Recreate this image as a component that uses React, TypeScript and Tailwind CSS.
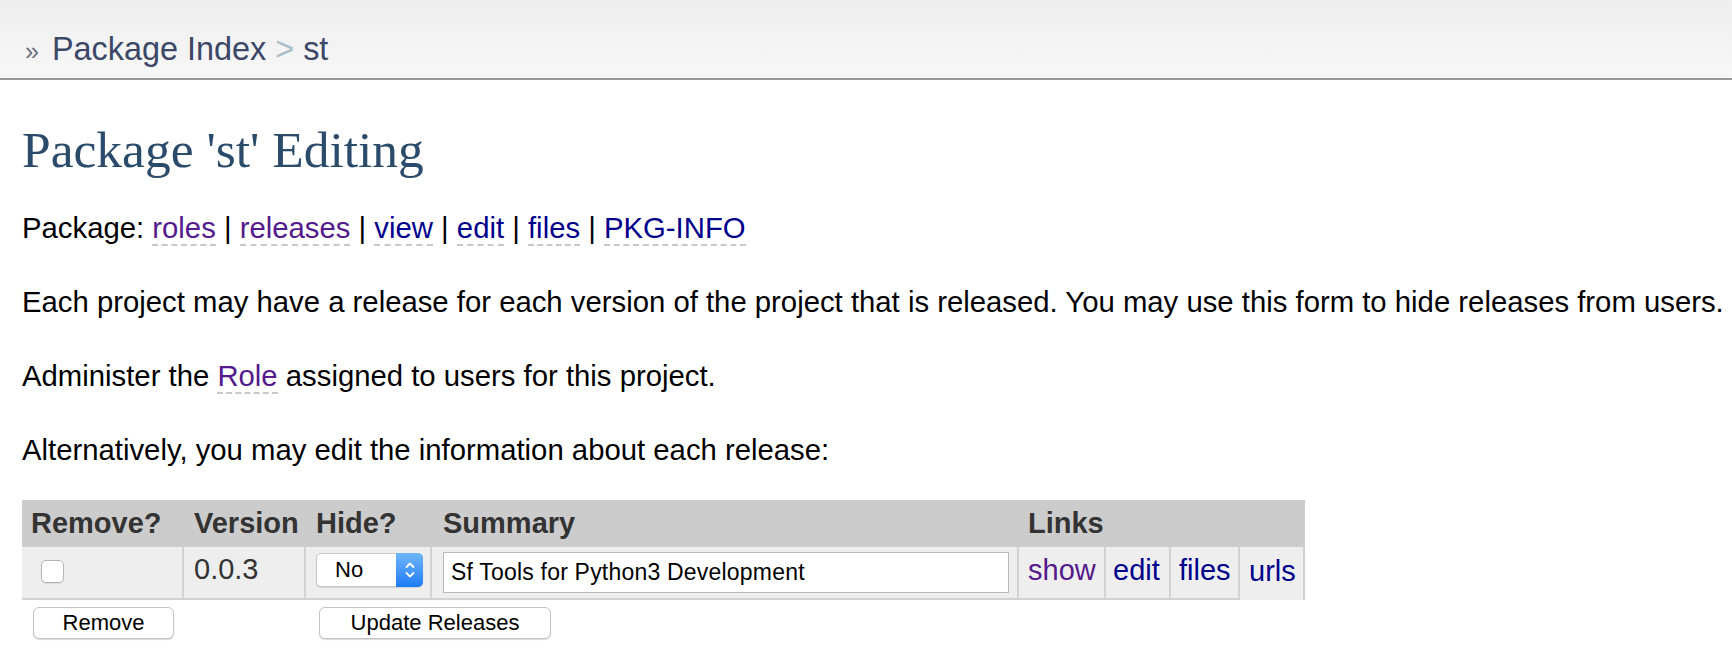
const dashed = "border-b-2 border-dashed border-[#c9c9c9]";
const visited = "text-[#551a8b]";
const link = "text-[#00008b]";

function HideSelect() {
  return (
    <div className="flex h-[34px] w-[107px] items-center rounded-[5px] border border-[#c8c8c8] bg-white shadow-[0_1px_1px_rgba(0,0,0,0.12)]">
      <span className="flex-1 pl-[18px] text-[22px] leading-none text-black">No</span>
      <span className="flex h-[34px] w-[27px] -mr-px -my-px items-center justify-center rounded-r-[5px] bg-linear-to-b from-[#6fb6fb] to-[#1a7bf4]">
        <svg width="12" height="22" viewBox="0 0 12 22" fill="none" stroke="white" strokeWidth="1.8" strokeLinecap="round" strokeLinejoin="round">
          <path d="M2.5 8 L6 4.5 L9.5 8" />
          <path d="M2.5 14 L6 17.5 L9.5 14" />
        </svg>
      </span>
    </div>
  );
}

function Button({ children, className }: { children: string; className?: string }) {
  return (
    <button
      className={
        "h-[32px] rounded-[6px] border border-[#c4c4c4] bg-white text-[22px] leading-none text-black shadow-[0_1px_1px_rgba(0,0,0,0.15)] " +
        (className ?? "")
      }
    >
      {children}
    </button>
  );
}

export default function App() {
  const cell = "h-[53px] bg-[#eeeeee] border-r-2 border-b-2 border-[#d2d2d2] align-middle";
  return (
    <div className="min-h-screen bg-white font-['Liberation_Sans',Arial,sans-serif] text-black">
      <header className="h-[80px] border-b-2 border-[#999999] bg-linear-to-b from-[#efeeef] to-[#f8f7f8] pl-[25px] pt-[31px]">
        <div className="flex items-baseline whitespace-pre text-[32.4px] leading-[37px] text-[#3b4766]">
          <span className="mr-[13px] text-[25px] text-[#6b7585]">»</span>
          <a>Package Index</a>
          <span className="text-[#a9bec6]"> &gt; </span>
          <span>st</span>
        </div>
      </header>

      <main className="pl-[22px]">
        <h1 className="mt-[40px] font-['Liberation_Serif',Georgia,serif] text-[51.5px] font-normal leading-[60px] text-[#2b4b6a]">
          Package 'st' Editing
        </h1>

        <p className="mt-[29px] whitespace-nowrap text-[29.3px] leading-[38px]">
          Package: <a className={`${visited} ${dashed}`}>roles</a> |{" "}
          <a className={`${visited} ${dashed}`}>releases</a> |{" "}
          <a className={`${link} ${dashed}`}>view</a> |{" "}
          <a className={`${link} ${dashed}`}>edit</a> |{" "}
          <a className={`${link} ${dashed}`}>files</a> |{" "}
          <a className={`${link} ${dashed}`}>PKG-INFO</a>
        </p>

        <p className="mt-[36px] whitespace-nowrap text-[29.3px] leading-[38px]">
          Each project may have a release for each version of the project that is released. You may use this form to hide
          releases from users.
        </p>

        <p className="mt-[36px] whitespace-nowrap text-[29.3px] leading-[38px]">
          Administer the <a className={`${visited} ${dashed}`}>Role</a> assigned to users for this project.
        </p>

        <p className="mt-[36px] whitespace-nowrap text-[29.3px] leading-[38px]">
          Alternatively, you may edit the information about each release:
        </p>

        <table className="mt-[31px] w-[1283px] table-fixed border-separate border-spacing-0 text-[29px] leading-[33px]">
          <colgroup>
            <col className="w-[162px]" />
            <col className="w-[122px]" />
            <col className="w-[126px]" />
            <col className="w-[587px]" />
            <col className="w-[87px]" />
            <col className="w-[65px]" />
            <col className="w-[69px]" />
            <col className="w-[65px]" />
          </colgroup>
          <thead>
            <tr className="h-[47px] bg-[#cccccc] text-left font-bold text-[#333333]">
              <th className="pl-[9px]">Remove?</th>
              <th className="pl-[10px]">Version</th>
              <th className="pl-[10px]">Hide?</th>
              <th className="pl-[11px]">Summary</th>
              <th colSpan={4} className="pl-[9px]">
                Links
              </th>
            </tr>
          </thead>
          <tbody>
            <tr>
              <td className={`${cell} pl-[19px] pb-[2px]`}>
                <input
                  type="checkbox"
                  className="block h-[23px] w-[23px] appearance-none rounded-[5px] border border-[#b4b4b4] bg-white shadow-[0_1px_1px_rgba(0,0,0,0.08)]"
                />
              </td>
              <td className={`${cell} pl-[10px] pb-[6px] text-[#333333]`}>0.0.3</td>
              <td className={`${cell} pl-[10px] pb-[6px]`}>
                <HideSelect />
              </td>
              <td className={`${cell} pl-[11px]`}>
                <input
                  type="text"
                  defaultValue="Sf Tools for Python3 Development"
                  className="block h-[41px] w-[566px] border border-[#b9b9b9] bg-white px-[7px] text-[23px] tracking-[0.2px] text-black outline-none"
                />
              </td>
              <td className={`${cell} pl-[9px] pb-[5px]`}>
                <a className={visited}>show</a>
              </td>
              <td className={`${cell} pl-[7px] pb-[5px]`}>
                <a className={link}>edit</a>
              </td>
              <td className={`${cell} pl-[8px] pb-[5px]`}>
                <a className={link}>files</a>
              </td>
              <td className="h-[53px] border-r-2 border-[#d2d2d2] bg-[#eeeeee] pb-[5px] pl-[9px] align-middle">
                <a className={link}>urls</a>
              </td>
            </tr>
            <tr>
              <td className="pl-[11px] pt-[4px] align-top">
                <Button className="w-[141px]">Remove</Button>
              </td>
              <td />
              <td colSpan={2} className="pl-[13px] pt-[4px] align-top">
                <Button className="w-[232px]">Update Releases</Button>
              </td>
              <td colSpan={4} />
            </tr>
          </tbody>
        </table>
      </main>
    </div>
  );
}
